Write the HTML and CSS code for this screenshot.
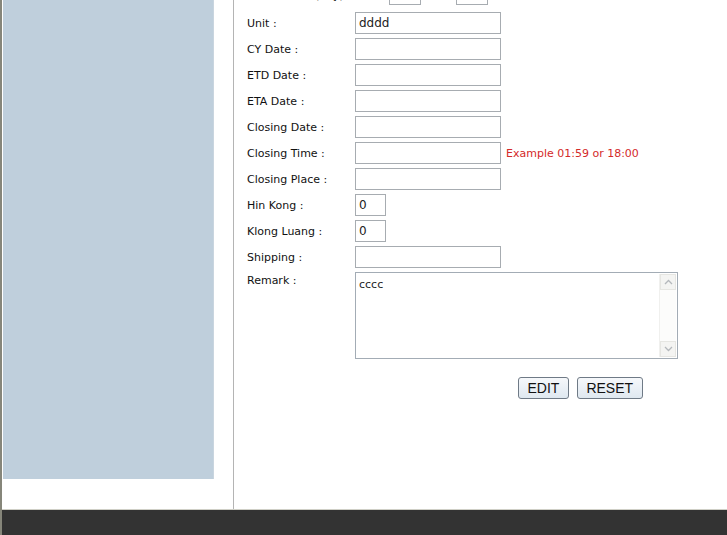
FILE: index.html
```html
<!DOCTYPE html>
<html lang="en">
<head>
    <meta charset="UTF-8">
    <title>Edit Booking</title>
    <link rel="stylesheet" href="styles.css">
</head>
<body>

<div class="frame">
    <div class="main">
        <div class="side">
            <div class="menu"></div>
        </div>
        <div class="content">
            <form class="form" onsubmit="return false;">
                <div class="row top-row">
                    <label class="lbl">Free Time (day) :</label>
                    <div class="field">
                        <input type="text" class="txt tiny first">
                        <span class="between">to</span>
                        <input type="text" class="txt tiny">
                    </div>
                </div>
                <div class="row">
                    <label class="lbl">Unit :</label>
                    <div class="field"><input type="text" class="txt" value="dddd"></div>
                </div>
                <div class="row">
                    <label class="lbl">CY Date :</label>
                    <div class="field"><input type="text" class="txt"></div>
                </div>
                <div class="row">
                    <label class="lbl">ETD Date :</label>
                    <div class="field"><input type="text" class="txt"></div>
                </div>
                <div class="row">
                    <label class="lbl">ETA Date :</label>
                    <div class="field"><input type="text" class="txt"></div>
                </div>
                <div class="row">
                    <label class="lbl">Closing Date :</label>
                    <div class="field"><input type="text" class="txt"></div>
                </div>
                <div class="row">
                    <label class="lbl">Closing Time :</label>
                    <div class="field">
                        <input type="text" class="txt">
                        <span class="hint">Example 01:59 or 18:00</span>
                    </div>
                </div>
                <div class="row">
                    <label class="lbl">Closing Place :</label>
                    <div class="field"><input type="text" class="txt"></div>
                </div>
                <div class="row">
                    <label class="lbl">Hin Kong :</label>
                    <div class="field"><input type="text" class="txt small" value="0"></div>
                </div>
                <div class="row">
                    <label class="lbl">Klong Luang :</label>
                    <div class="field"><input type="text" class="txt small" value="0"></div>
                </div>
                <div class="row">
                    <label class="lbl">Shipping :</label>
                    <div class="field"><input type="text" class="txt"></div>
                </div>
                <div class="row remark-row">
                    <label class="lbl">Remark :</label>
                    <div class="field">
                        <div class="area-wrap">
                            <textarea class="area">cccc</textarea>
                            <div class="fake-scroll">
                                <span class="sb-btn">
                                    <svg width="9" height="6" viewBox="0 0 9 6"><path d="M1 5 L4.5 1.5 L8 5" fill="none" stroke="#b4b8bc" stroke-width="1.3"/></svg>
                                </span>
                                <span class="sb-btn">
                                    <svg width="9" height="6" viewBox="0 0 9 6"><path d="M1 1 L4.5 4.5 L8 1" fill="none" stroke="#b4b8bc" stroke-width="1.3"/></svg>
                                </span>
                            </div>
                        </div>
                    </div>
                </div>
                <div class="actions">
                    <button type="submit" class="btn">EDIT</button>
                    <button type="reset" class="btn">RESET</button>
                </div>
            </form>
        </div>
    </div>
    <div class="footer"></div>
</div>

</body>
</html>
```

FILE: styles.css
```css
body {
    margin: 0;
    background-color: #fff;
    font-family: Tahoma, "DejaVu Sans", Verdana, sans-serif;
    overflow: hidden;
}
.frame {
    width: 727px;
    height: 535px;
    display: flex;
    flex-direction: column;
    border-left: 2px solid #86867a;
    box-sizing: border-box;
}
.main {
    flex-grow: 1;
    display: flex;
    min-height: 0;
}
.side {
    width: 230px;
    padding-left: 1px;
    border-right: 1px solid #b4b4b4;
    flex-shrink: 0;
}
.menu {
    width: 210px;
    height: 479px;
    background-color: #bfcfdc;
    border-right: 1px solid #c9d5df;
}
.content {
    flex-grow: 1;
    padding-left: 13px;
    overflow: hidden;
}
.form {
    margin-top: -18px;
}
.row {
    display: flex;
    align-items: center;
    height: 26px;
}
.lbl {
    width: 108px;
    flex-shrink: 0;
    font-size: 11px;
    color: #111;
    white-space: nowrap;
}
.field {
    display: flex;
    align-items: center;
}
.txt {
    width: 146px;
    height: 22px;
    box-sizing: border-box;
    border: 1px solid #a7acb1;
    padding: 0 3px;
    font-family: Tahoma, "DejaVu Sans", sans-serif;
    font-size: 12px;
    color: #222;
    background: #fff;
    margin: 0;
}
.txt.small {
    width: 31px;
}
.top-row {
    height: 28px;
    align-items: flex-start;
}
.top-row .lbl {
    text-align: right;
    padding-right: 4px;
    box-sizing: border-box;
    line-height: 12px;
    margin-top: 8px;
}
.top-row .field {
    align-items: flex-start;
}
.txt.tiny {
    width: 32px;
    height: 19px;
    margin-top: 4px;
}
.txt.tiny.first {
    margin-left: 34px;
}
.between {
    font-size: 11px;
    color: #222;
    width: 35px;
    text-align: center;
    line-height: 12px;
    margin-top: 8px;
}
.hint {
    color: #d42a2a;
    font-size: 11px;
    margin-left: 5px;
}
.remark-row {
    height: auto;
    align-items: flex-start;
    margin-top: 2px;
}
.remark-row .lbl {
    padding-top: 2px;
}
.area-wrap {
    position: relative;
}
.area {
    display: block;
    width: 323px;
    height: 87px;
    box-sizing: border-box;
    border: 1px solid #a3acb5;
    padding: 5px 3px;
    font-family: Tahoma, "DejaVu Sans", sans-serif;
    font-size: 11px;
    color: #222;
    resize: none;
    overflow: hidden;
    margin: 0;
}
.fake-scroll {
    position: absolute;
    top: 2px;
    right: 2px;
    bottom: 2px;
    width: 16px;
    background: #fcfcfb;
    border-left: 1px solid #f0f0ee;
    display: flex;
    flex-direction: column;
    justify-content: space-between;
}
.sb-btn {
    height: 16px;
    background: #f4f4f2;
    border: 1px solid #e6e6e2;
    box-sizing: border-box;
    display: flex;
    align-items: center;
    justify-content: center;
}
.actions {
    padding-left: 271px;
    margin-top: 18px;
    display: flex;
    gap: 8px;
}
.btn {
    height: 22px;
    padding: 0 8.5px;
    font-family: "Liberation Sans", Arial, sans-serif;
    font-size: 14px;
    color: #111;
    background: linear-gradient(#f6f8fb, #dfe8f0);
    border: 1px solid #6f7a86;
    border-radius: 3px;
    cursor: pointer;
}
.footer {
    height: 25px;
    flex-shrink: 0;
    background-color: #333;
    border-top: 1px solid #cfcfc6;
}
```
